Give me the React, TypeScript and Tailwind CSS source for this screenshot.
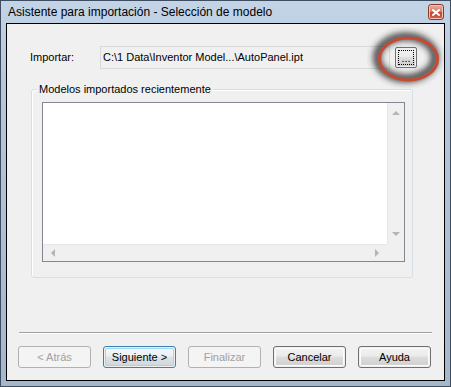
import React from "react";

const font = { fontFamily: '"Liberation Sans", Arial, sans-serif' };

function Btn({ label, disabled, focused }: { label: string; disabled?: boolean; focused?: boolean }) {
  if (disabled) {
    return (
      <div className="w-[73px] h-[22px] rounded-[3px] border border-[#adb2b5] bg-[#f4f4f4] flex items-center justify-center text-[11px] text-[#a0a0a0]">
        {label}
      </div>
    );
  }
  return (
    <div
      className={`w-[73px] h-[22px] rounded-[3px] border ${focused ? "border-[#3c7fb1]" : "border-[#707070]"} p-[1px] bg-[#f0f0f0]`}
    >
      <div
        className={`w-full h-full rounded-[2px] flex items-center justify-center text-[11px] text-black ${
          focused
            ? "bg-[linear-gradient(#f4f8fb_0%,#ebf0f3_45%,#dde4e8_50%,#cfd7dc_100%)] shadow-[inset_0_0_0_1px_#9fd5f3]"
            : "bg-[linear-gradient(#f2f2f2_0%,#ebebeb_45%,#dddddd_50%,#cfcfcf_100%)] shadow-[inset_0_0_0_1px_#fcfcfc]"
        }`}
      >
        {label}
      </div>
    </div>
  );
}

function Arrow({ dir }: { dir: "up" | "down" | "left" | "right" }) {
  const pts =
    dir === "up"
      ? "0,4 4,0 8,4"
      : dir === "down"
      ? "0,0 8,0 4,4"
      : dir === "left"
      ? "4,0 4,8 0,4"
      : "0,0 0,8 4,4";
  const w = dir === "up" || dir === "down" ? 8 : 4;
  const h = dir === "up" || dir === "down" ? 4 : 8;
  return (
    <svg width={w} height={h} viewBox={`0 0 ${w} ${h}`}>
      <polygon points={pts} fill="#b4b4b4" />
    </svg>
  );
}

export default function App() {
  return (
    <div
      className="relative w-[451px] h-[387px] border border-[#3e4e60] bg-[linear-gradient(#c4d4e7_0%,#b6c8dc_20%,#a3b7cd_100%)] overflow-hidden"
      style={font}
    >
      {/* title bar */}
      <div className="h-[22px] flex items-center pl-[7px] pr-[6px]">
        <span className="text-[12px] text-black flex-1 leading-none">
          Asistente para importación - Selección de modelo
        </span>
        <div className="w-[16px] h-[16px] rounded-[3px] border border-[#8a3b2c] bg-[linear-gradient(#eab1a5_0%,#d9735f_50%,#c0412a_55%,#d1644d_100%)] flex items-center justify-center shadow-[inset_0_0_0_1px_#f2c4b9]">
          <svg width="8" height="7" viewBox="0 0 8 7">
            <path d="M1 1 L7 6 M7 1 L1 6" stroke="#ffffff" strokeWidth="2" strokeLinecap="square" />
          </svg>
        </div>
      </div>

      {/* client */}
      <div className="ml-[5px] w-[439px] h-[358px] border border-black bg-[#f0f0f0] flex flex-col">
        {/* import row */}
        <div className="mt-[22px] ml-[23px] h-[23px] flex items-center">
          <span className="w-[70px] text-[11px] text-black">Importar:</span>
          <div className="w-[290px] h-[23px] border border-[#d9d9d9] bg-[#f0f0f0] flex items-center pl-[2px] text-[11px] text-black">
            C:\1 Data\Inventor Model...\AutoPanel.ipt
          </div>
          <div className="ml-[5px] w-[22px] h-[21px] rounded-[2px] border border-[#707070] p-[1px]">
            <div className="w-full h-full bg-[linear-gradient(#f2f2f2_0%,#ebebeb_45%,#dddddd_50%,#cfcfcf_100%)] outline outline-1 outline-dotted outline-offset-[-2px] outline-black flex items-end justify-center pb-[2px] text-[11px] leading-[11px] text-black">
              ...
            </div>
          </div>
        </div>

        {/* group box */}
        <div className="relative mt-[20px] ml-[24px] w-[382px] h-[189px] rounded-[3px] border border-[#d5dfe5] shadow-[inset_1px_1px_0_#ffffff]">
          <span className="absolute -top-[8px] left-[5px] px-[2px] bg-[#f0f0f0] text-[11px] text-black leading-[14px]">
            Modelos importados recientemente
          </span>
          <div className="mt-[12px] ml-[10px] w-[363px] h-[160px] border border-[#828790] bg-white flex flex-col">
            <div className="flex flex-1">
              <div className="flex-1" />
              <div className="w-[17px] bg-[#f0f0f0] border-l border-[#e6e6e6] flex flex-col items-center justify-between py-[8px]">
                <Arrow dir="up" />
                <Arrow dir="down" />
              </div>
            </div>
            <div className="h-[17px] flex">
              <div className="flex-1 bg-[#f0f0f0] border-t border-[#e6e6e6] flex items-center justify-between px-[8px]">
                <Arrow dir="left" />
                <Arrow dir="right" />
              </div>
              <div className="w-[17px] bg-[#f0f0f0]" />
            </div>
          </div>
        </div>

        {/* separator */}
        <div className="mt-[54px] ml-[12px] w-[413px] h-[2px] border-t border-[#a0a0a0] border-b border-b-white" />

        {/* buttons */}
        <div className="mt-[12px] ml-[11px] flex gap-[12px]">
          <Btn label="< Atrás" disabled />
          <Btn label="Siguiente >" focused />
          <Btn label="Finalizar" disabled />
          <Btn label="Cancelar" />
          <Btn label="Ayuda" />
        </div>
      </div>

      {/* highlight ellipse */}
      <svg className="absolute left-[366px] top-[26px] pointer-events-none" width="84" height="66" viewBox="0 0 84 66">
        <defs>
          <filter id="b" x="-30%" y="-30%" width="160%" height="160%">
            <feGaussianBlur stdDeviation="3" />
          </filter>
        </defs>
        <ellipse cx="39" cy="30.5" rx="29" ry="21" fill="none" stroke="#2a2a2a" strokeOpacity="0.85" strokeWidth="8" filter="url(#b)" />
        <ellipse cx="41.5" cy="32" rx="29" ry="21" fill="none" stroke="#c64a33" strokeWidth="3" />
      </svg>
    </div>
  );
}
